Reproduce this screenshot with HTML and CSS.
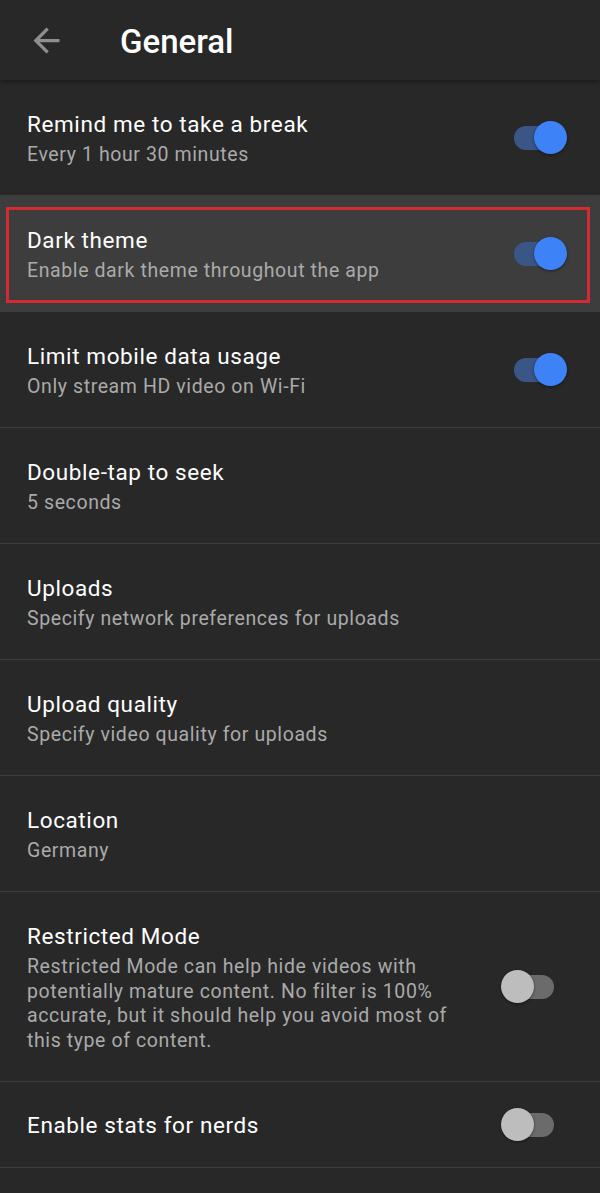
FILE: index.html
```html
<!DOCTYPE html>
<html lang="en">
<head>
<meta charset="utf-8">
<title>General</title>
<link rel="stylesheet" href="styles.css">
</head>
<body>
<div class="screen">
  <header class="appbar">
    <svg class="back" viewBox="0 0 24 24" width="39" height="39" aria-hidden="true">
      <path d="M20 11H7.83l5.59-5.59L12 4l-8 8 8 8 1.41-1.41L7.83 13H20v-2z" fill="#8f8f8f"/>
    </svg>
    <h1 class="title">General</h1>
  </header>
  <main class="list">
    <div class="row">
      <div class="text">
        <div class="label">Remind me to take a break</div>
        <div class="sub">Every 1 hour 30 minutes</div>
      </div>
      <div class="switch on"><span class="track"></span><span class="thumb"></span></div>
    </div>
    <div class="row highlight">
      <div class="frame"></div>
      <div class="text">
        <div class="label">Dark theme</div>
        <div class="sub">Enable dark theme throughout the app</div>
      </div>
      <div class="switch on"><span class="track"></span><span class="thumb"></span></div>
    </div>
    <div class="row">
      <div class="text">
        <div class="label">Limit mobile data usage</div>
        <div class="sub">Only stream HD video on Wi-Fi</div>
      </div>
      <div class="switch on"><span class="track"></span><span class="thumb"></span></div>
    </div>
    <div class="row">
      <div class="text">
        <div class="label">Double-tap to seek</div>
        <div class="sub">5 seconds</div>
      </div>
    </div>
    <div class="row">
      <div class="text">
        <div class="label">Uploads</div>
        <div class="sub">Specify network preferences for uploads</div>
      </div>
    </div>
    <div class="row">
      <div class="text">
        <div class="label">Upload quality</div>
        <div class="sub">Specify video quality for uploads</div>
      </div>
    </div>
    <div class="row">
      <div class="text">
        <div class="label">Location</div>
        <div class="sub">Germany</div>
      </div>
    </div>
    <div class="row tall">
      <div class="text narrow">
        <div class="label">Restricted Mode</div>
        <div class="sub">Restricted Mode can help hide videos with potentially mature content. No filter is 100% accurate, but it should help you avoid most of this type of content.</div>
      </div>
      <div class="switch off"><span class="track"></span><span class="thumb"></span></div>
    </div>
    <div class="row short">
      <div class="text">
        <div class="label">Enable stats for nerds</div>
      </div>
      <div class="switch off"><span class="track"></span><span class="thumb"></span></div>
    </div>
  </main>
</div>
</body>
</html>
```
FILE: styles.css
```css
html, body {
  margin: 0;
  padding: 0;
  background: #282828;
}
body {
  font-family: Roboto, "Liberation Sans", sans-serif;
  color: #ffffff;
}
.screen {
  width: 600px;
  min-height: 1193px;
  background: #282828;
  overflow: hidden;
}
.appbar {
  height: 80px;
  display: flex;
  align-items: center;
  background: #282828;
  box-shadow: 0 2px 4px rgba(0,0,0,0.35);
  position: relative;
  z-index: 1;
}
.back {
  margin-left: 27px;
  flex: none;
}
.title {
  margin: 2px 0 0 54px;
  font-size: 33px;
  font-weight: 500;
  color: #ffffff;
  letter-spacing: 0;
}
.list {
  display: flex;
  flex-direction: column;
}
.row {
  position: relative;
  height: 115px;
  border-bottom: 1px solid #3d3d3d;
  display: flex;
  align-items: center;
  justify-content: space-between;
  padding: 0 33px 0 27px;
  box-sizing: content-box;
}
.row.highlight {
  background: #3d3d3d;
  border-bottom-color: #3d3d3d;
}
.row.tall {
  height: 189px;
}
.row.short {
  height: 85px;
}
.frame {
  position: absolute;
  left: 6px;
  top: 11px;
  right: 10px;
  bottom: 8px;
  border: 3px solid #d42a33;
  pointer-events: none;
}
.text {
  display: flex;
  flex-direction: column;
  margin-top: 1px;
}
.text.narrow {
  width: 432px;
}
.label {
  font-size: 22.5px;
  letter-spacing: 0.6px;
  line-height: 30px;
  color: #ffffff;
}
.sub {
  font-size: 19.5px;
  letter-spacing: 0.6px;
  line-height: 24.5px;
  color: #aaaaaa;
  margin-top: 4px;
}
.switch {
  position: relative;
  width: 66px;
  height: 33px;
  flex: none;
}
.switch .track {
  position: absolute;
  top: 5px;
  width: 47px;
  height: 24px;
  border-radius: 12px;
}
.switch .thumb {
  position: absolute;
  top: 0;
  width: 33px;
  height: 33px;
  border-radius: 50%;
  box-shadow: 0 1px 3px rgba(0,0,0,0.45);
}
.switch.on .track {
  left: 13px;
  background: #3a5687;
}
.switch.on .thumb {
  left: 33px;
  background: #3e82f7;
}
.switch.off .track {
  left: 6px;
  background: #6b6b6b;
}
.switch.off .thumb {
  left: 0;
  background: #bdbdbd;
}
```
